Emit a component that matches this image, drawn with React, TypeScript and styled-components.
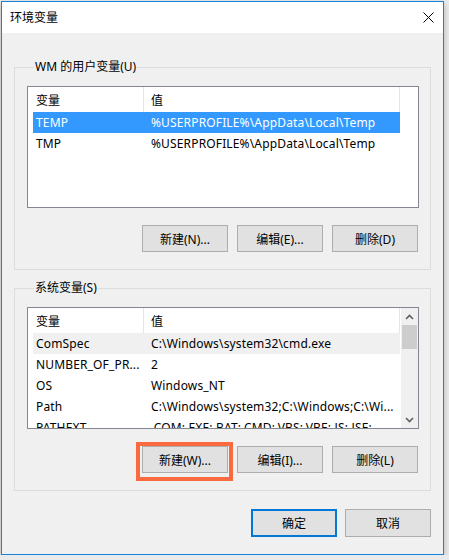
import React from "react";
import styled, { createGlobalStyle } from "styled-components";

const GlobalStyle = createGlobalStyle`
  html, body { margin: 0; padding: 0; background: #eaeaea; }
  body {
    font-family: "Noto Sans", "Noto Sans CJK SC", sans-serif;
    font-size: 12px;
    color: #000;
  }
  * { box-sizing: border-box; }
`;

const Window = styled.div`
  width: 443px;
  height: 554px;
  margin: 1px 0 0 1px;
  border: 1px solid #1883d7;
  background: #f0f0f0;
  display: flex;
  flex-direction: column;
  box-shadow: 0 3px 6px rgba(0, 0, 0, 0.25);
`;

const TitleBar = styled.div`
  height: 31px;
  background: #fff;
  display: flex;
  align-items: center;
  justify-content: space-between;
  padding: 0 9px 0 8px;
`;

const Title = styled.span`
  font-size: 12px;
  line-height: 16px;
`;

const Body = styled.div`
  flex: 1;
  display: flex;
  flex-direction: column;
  padding: 26px 12px 15px 12px;
`;

const Group = styled.fieldset<{ $gap?: number }>`
  margin: ${(p) => p.$gap ?? 0}px 0 0 0;
  padding: 11px 12px 17px 12px;
  border: 1px solid #dcdcdc;
  min-width: 0;
  display: flex;
  flex-direction: column;
`;

const Legend = styled.legend`
  margin-left: 7px;
  padding: 0 1px;
  line-height: 16px;
  font-size: 12px;
`;

const List = styled.div`
  width: 392px;
  height: 122px;
  border: 1px solid #828790;
  background: #fff;
  display: flex;
  overflow: hidden;
`;

const ListBody = styled.div`
  flex: 1;
  padding-left: 5px;
  display: flex;
  flex-direction: column;
`;

const Row = styled.div<{ $state?: "active" | "inactive" }>`
  width: 367px;
  height: 21px;
  flex: none;
  display: grid;
  grid-template-columns: 111px 256px;
  align-items: center;
  white-space: nowrap;
  letter-spacing: 0.15px;
  background: ${(p) =>
    p.$state === "active" ? "#3399ff" : p.$state === "inactive" ? "#f0f0f0" : "transparent"};
  color: ${(p) => (p.$state === "active" ? "#fff" : "#000")};
`;

const HeaderRow = styled(Row)`
  height: 25px;
  letter-spacing: 0;
`;

const Cell = styled.span<{ $first?: boolean; $divider?: boolean }>`
  padding-left: ${(p) => (p.$first ? 3 : 7)}px;
  overflow: hidden;
  height: 100%;
  display: flex;
  align-items: center;
  border-right: ${(p) => (p.$divider ? "1px solid #e5e5e5" : "none")};
`;

const Scrollbar = styled.div`
  width: 17px;
  flex: none;
  background: #f0f0f0;
  display: flex;
  flex-direction: column;
`;

const ArrowBox = styled.div`
  height: 17px;
  display: flex;
  align-items: center;
  justify-content: center;
`;

const Track = styled.div`
  flex: 1;
  padding: 0 1px;
`;

const Thumb = styled.div`
  height: 24px;
  background: #cdcdcd;
`;

const ButtonRow = styled.div<{ $mt?: number }>`
  display: flex;
  justify-content: flex-end;
  gap: 9px;
  margin-top: ${(p) => p.$mt ?? 17}px;
`;

const Button = styled.button<{ $default?: boolean; $h?: number; $marked?: boolean }>`
  position: relative;
  width: 86px;
  height: ${(p) => p.$h ?? 27}px;
  padding: 0;
  margin: 0;
  font-family: inherit;
  font-size: 12px;
  color: #000;
  background: #e1e1e1;
  border: ${(p) => (p.$default ? "2px solid #0078d7" : "1px solid #adadad")};
  display: flex;
  align-items: center;
  justify-content: center;
  &::after {
    content: "";
    display: ${(p) => (p.$marked ? "block" : "none")};
    position: absolute;
    left: -7px;
    top: -5px;
    right: -6px;
    bottom: -9px;
    border: 4px solid #f96b3e;
  }
`;

const Footer = styled.div`
  display: flex;
  justify-content: flex-end;
  gap: 8px;
  margin-top: 18px;
`;

const CloseIcon = () => (
  <svg width="11" height="11" viewBox="0 0 11 11">
    <path d="M0.5 0.5 L10.5 10.5 M10.5 0.5 L0.5 10.5" stroke="#000" strokeWidth="1" fill="none" />
  </svg>
);

const Chevron = ({ up }: { up?: boolean }) => (
  <svg width="9" height="6" viewBox="0 0 9 6">
    <path
      d={up ? "M1 5 L4.5 1.5 L8 5" : "M1 1 L4.5 4.5 L8 1"}
      stroke="#606060"
      strokeWidth="1.6"
      fill="none"
    />
  </svg>
);

type Item = { name: string; value: string; state?: "active" | "inactive" };

const userVars: Item[] = [
  { name: "TEMP", value: "%USERPROFILE%\\AppData\\Local\\Temp", state: "active" },
  { name: "TMP", value: "%USERPROFILE%\\AppData\\Local\\Temp" },
];

const sysVars: Item[] = [
  { name: "ComSpec", value: "C:\\Windows\\system32\\cmd.exe", state: "inactive" },
  { name: "NUMBER_OF_PR...", value: "2" },
  { name: "OS", value: "Windows_NT" },
  { name: "Path", value: "C:\\Windows\\system32;C:\\Windows;C:\\Wi..." },
  { name: "PATHEXT", value: ".COM;.EXE;.BAT;.CMD;.VBS;.VBE;.JS;.JSE;..." },
];

const VarList = ({ items, scroll }: { items: Item[]; scroll?: boolean }) => (
  <List>
    <ListBody>
      <HeaderRow>
        <Cell $first $divider>变量</Cell>
        <Cell $divider>值</Cell>
      </HeaderRow>
      {items.map((it) => (
        <Row key={it.name} $state={it.state}>
          <Cell $first>{it.name}</Cell>
          <Cell>{it.value}</Cell>
        </Row>
      ))}
    </ListBody>
    {scroll && (
      <Scrollbar>
        <ArrowBox>
          <Chevron up />
        </ArrowBox>
        <Track>
          <Thumb />
        </Track>
        <ArrowBox>
          <Chevron />
        </ArrowBox>
      </Scrollbar>
    )}
  </List>
);

export default function App() {
  return (
    <>
      <GlobalStyle />
      <Window>
        <TitleBar>
          <Title>环境变量</Title>
          <CloseIcon />
        </TitleBar>
        <Body>
          <Group>
            <Legend>WM 的用户变量(U)</Legend>
            <VarList items={userVars} />
            <ButtonRow>
              <Button>新建(N)...</Button>
              <Button>编辑(E)...</Button>
              <Button>删除(D)</Button>
            </ButtonRow>
          </Group>
          <Group $gap={10}>
            <Legend>系统变量(S)</Legend>
            <VarList items={sysVars} scroll />
            <ButtonRow>
              <Button $marked>新建(W)...</Button>
              <Button>编辑(I)...</Button>
              <Button>删除(L)</Button>
            </ButtonRow>
          </Group>
          <Footer>
            <Button $default $h={28}>确定</Button>
            <Button $h={28}>取消</Button>
          </Footer>
        </Body>
      </Window>
    </>
  );
}
